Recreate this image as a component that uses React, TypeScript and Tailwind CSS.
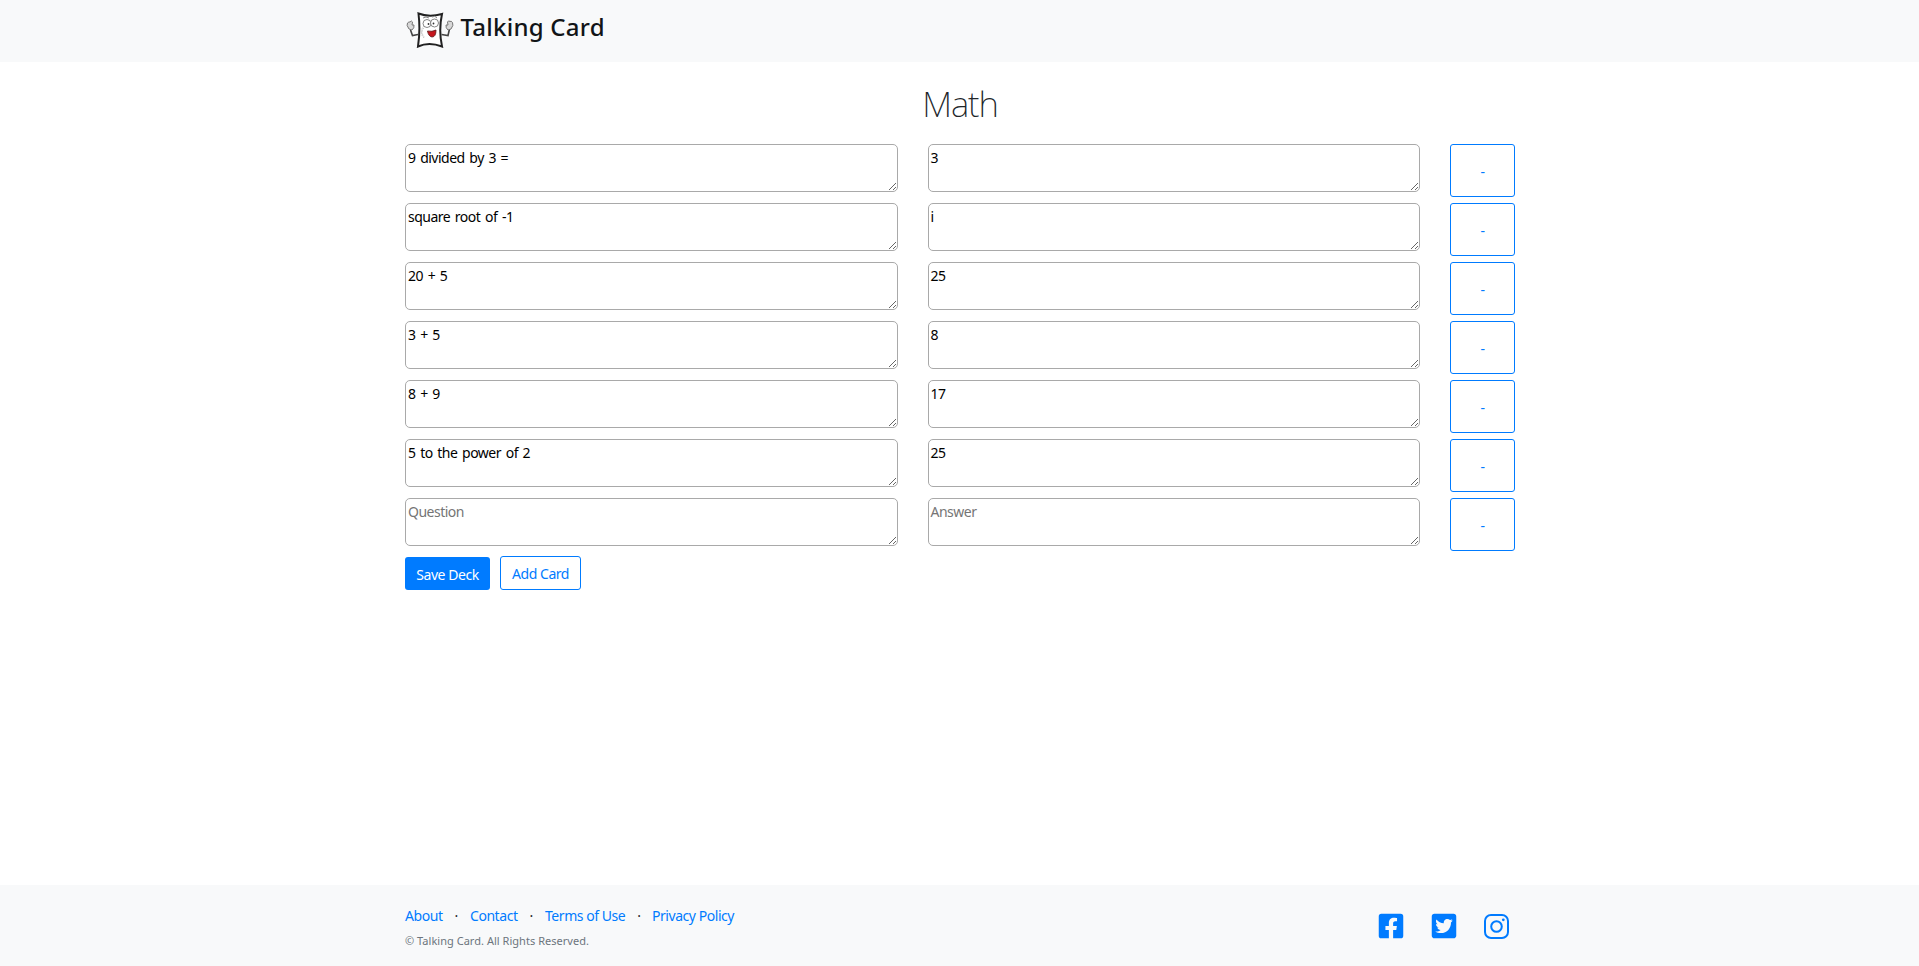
import { FaFacebookSquare, FaTwitterSquare } from "react-icons/fa";

const cards: [string, string][] = [
  ["9 divided by 3 =", "3"],
  ["square root of -1", "i"],
  ["20 + 5", "25"],
  ["3 + 5", "8"],
  ["8 + 9", "17"],
  ["5 to the power of 2", "25"],
  ["", ""],
];

const field =
  "block h-12 min-w-0 flex-1 resize rounded-[5px] border border-[#a9a9a9] bg-white px-0.5 pt-0.5 text-[14px] leading-[21px] tracking-[-0.5px] [word-spacing:1.5px] text-black placeholder:text-[#757575]";

function Logo() {
  return (
    <svg width="48" height="36" viewBox="0 0 48 36" fill="none" stroke="#222" strokeWidth="1.2">
      <path d="M12.5 1.5Q23 5.5 36 2Q32.500 18 36 34.500Q23 29.500 12 34.500Q14.500 18 12.500 1.500Z" fill="#fff" strokeWidth="2" />
      <g stroke="#444" strokeWidth="1.6">
        <path d="M12 22.500L6.500 23.500L4.500 18M35.500 22.500L42 23.500L43.500 17" />
      </g>
      <g stroke="#777" fill="#d8d8d8" strokeWidth="1">
        <path d="M3 17Q0 13 1.500 11Q3 9.500 4 10Q5.500 8 6.500 10L6 13L8 13Q8.500 16 6 18Z" />
        <path d="M45 17Q48 13 46.500 10.500Q45 8.500 44 9.500Q42.500 8 41.500 10L42 13L40 13Q39.500 16 42 18Z" />
      </g>
      <path d="M20 13Q15 15 16 20T19 25M18 16Q13 21 18 26" stroke="#aaa" strokeWidth=".7" strokeDasharray="1.5 1" />
      <g strokeWidth=".9" stroke="#777" fill="#fff">
        <circle cx="21" cy="11.500" r="4" />
        <circle cx="28.500" cy="11" r="4" />
        <path d="M17 6Q20 4 23 6M26 5Q29 3 31 6" />
      </g>
      <circle cx="22.500" cy="12" r=".9" fill="#333" stroke="none" />
      <circle cx="27.500" cy="11.500" r=".9" fill="#333" stroke="none" />
      <path d="M21.500 19Q26 20 30 18Q30 25 26 25Q22.500 24.500 21.500 19Z" fill="#c5161d" stroke="#5b1517" strokeWidth=".8" />
    </svg>
  );
}

export default function App() {
  return (
    <div className="flex min-h-[966px] flex-col bg-white font-['Noto_Sans',sans-serif] text-[14px] tracking-[-0.45px] text-[#212529]">
      <header className="h-[62px] bg-[#f8f9fa]">
        <div className="mx-auto flex w-[1141px] items-start pr-[15px] pl-4">
          <span className="mt-[12px] ml-[1px]"><Logo /></span>
          <span className="mt-[9px] ml-[6.5px] text-[24px] leading-9 font-medium tracking-[0.25px] text-[#111417]">Talking Card</span>
        </div>
      </header>
      <main className="mx-auto w-[1141px] flex-1 pr-[15px] pl-4">
        <h1 className="mt-[20px] h-[62px] text-center text-[35px] leading-[43px] font-extralight tracking-[-1.1px]">Math</h1>
        <div className="flex flex-col gap-1.5">
          {cards.map(([q, a], i) => (
            <div key={i} className="flex h-[53px] items-start gap-[30px]">
              <textarea className={field} defaultValue={q} placeholder="Question" />
              <textarea className={field} defaultValue={a} placeholder="Answer" />
              <button className="h-[53px] w-[65px] shrink-0 rounded-[3px] border border-[#007bff] pt-0.5 text-[#007bff]">-</button>
            </div>
          ))}
        </div>
        <div className="mt-[5px] flex items-end gap-2.5">
          <button className="h-[33px] w-[85px] rounded-[3px] bg-[#007bff] pt-px text-white">Save Deck</button>
          <button className="h-[34px] w-[81px] rounded-[3px] border border-[#007bff] pt-px text-[#007bff]">Add Card</button>
        </div>
      </main>
      <footer className="h-[81px] bg-[#f8f9fa]">
        <div className="mx-auto flex w-[1141px] justify-between pr-[15px] pl-4">
          <div className="pt-5">
            <div className="flex leading-[21px] text-[#007bff]">
              <a className="w-[65px]">About<span className="ml-3 text-[#212529]">·</span></a>
              <a className="w-[75px]">Contact<span className="ml-3 text-[#212529]">·</span></a>
              <a className="w-[107px]">Terms of Use<span className="ml-3 text-[#212529]">·</span></a>
              <a>Privacy Policy</a>
            </div>
            <p className="mt-[6px] text-[11px] leading-[18px] tracking-[0.03px] text-[#6c757d]">© Talking Card. All Rights Reserved.</p>
          </div>
          <div className="mt-[27px] mr-[4px] flex gap-[25px] text-[#007bff]">
            <FaFacebookSquare size={28} />
            <FaTwitterSquare size={28} />
            <svg width="28" height="28" viewBox="0 0 28 28" fill="none" stroke="currentColor" strokeWidth="2">
              <rect x="2" y="3" width="23" height="23" rx="6" />
              <circle cx="13.5" cy="14.5" r="5.300" />
              <circle cx="20.300" cy="7.800" r="1.4" fill="currentColor" stroke="none" />
            </svg>
          </div>
        </div>
      </footer>
    </div>
  );
}
